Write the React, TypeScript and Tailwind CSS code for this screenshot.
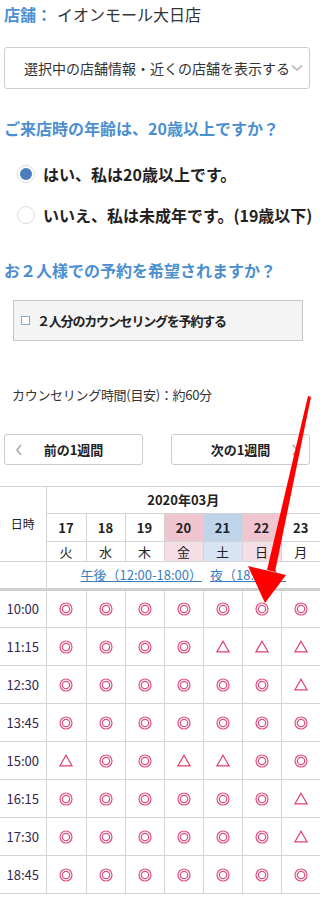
import React from "react";

const days = [
  { d: "17", w: "火", top: "", bot: "" },
  { d: "18", w: "水", top: "", bot: "" },
  { d: "19", w: "木", top: "", bot: "" },
  { d: "20", w: "金", top: "bg-[#f0c5cf]", bot: "bg-[#f6dee7]" },
  { d: "21", w: "土", top: "bg-[#bfd3e9]", bot: "bg-[#d8e4f3]" },
  { d: "22", w: "日", top: "bg-[#f0c5cf]", bot: "bg-[#f6dee7]" },
  { d: "23", w: "月", top: "", bot: "" },
];

const rows: [string, string][] = [
  ["10:00", "ooooooo"],
  ["11:15", "oooottt"],
  ["12:30", "oooooot"],
  ["13:45", "ooooooo"],
  ["15:00", "toottoo"],
  ["16:15", "oooooot"],
  ["17:30", "oooooot"],
  ["18:45", "ooooooo"],
];

function Mark({ t }: { t: string }) {
  if (t === "o") {
    return (
      <svg width="14" height="14" viewBox="0 0 14 14" className="inline-block">
        <circle cx="7" cy="7" r="6" fill="none" stroke="#e0507e" strokeWidth="1.2" />
        <circle cx="7" cy="7" r="3.7" fill="none" stroke="#d64d8a" strokeWidth="1.2" />
      </svg>
    );
  }
  return (
    <svg width="14" height="13" viewBox="0 0 14 13" className="inline-block">
      <path d="M7 1.2 L13 11.8 L1 11.8 Z" fill="none" stroke="#e0406e" strokeWidth="1.2" />
    </svg>
  );
}

export default function App() {
  const font = { fontFamily: '"Noto Sans CJK JP", "Noto Sans", sans-serif' };
  return (
    <div className="relative w-[320px] h-[899px] overflow-hidden bg-white text-[#333]" style={font}>
      {/* store */}
      <div className="pl-[4px] pt-[2px] text-[16px] leading-[24px] whitespace-nowrap">
        <span className="font-bold text-[#4b8fd0]">店舗：</span>
        <span className="ml-[5px] text-[#333]">イオンモール大日店</span>
      </div>

      {/* select */}
      <div className="mt-[21px] mx-[4px] w-[306px] h-[42px] border border-[#cfcfcf] rounded-[3px] flex items-center pl-[19px] text-[14px] text-[#333]">
        <span className="whitespace-nowrap">選択中の店舗情報・近くの店舗を表示する</span>
        <svg width="12" height="8" viewBox="0 0 12 8" className="ml-[1px]">
          <path d="M1 1.5 L6 6 L11 1.5" fill="none" stroke="#b0b0b0" strokeWidth="1.6" />
        </svg>
      </div>

      {/* question 1 */}
      <div className="mt-[27px] pl-[4px] text-[16px] leading-[24px] font-bold text-[#4b8fd0] whitespace-nowrap">
        ご来店時の年齢は、20歳以上ですか？
      </div>
      <div className="mt-[24px] flex items-center pl-[17px] h-[20px]">
        <span className="w-[18px] h-[18px] rounded-full border border-[#dddddd] bg-white flex items-center justify-center">
          <span className="w-[12px] h-[12px] rounded-full bg-[#4a7fbf]" />
        </span>
        <span className="ml-[8px] text-[16px] font-bold text-[#222] whitespace-nowrap">はい、私は20歳以上です。</span>
      </div>
      <div className="mt-[21px] flex items-center pl-[17px] h-[20px]">
        <span className="w-[18px] h-[18px] rounded-full border border-[#dddddd] bg-white" />
        <span className="ml-[8px] text-[16px] font-bold text-[#222] whitespace-nowrap">いいえ、私は未成年です。(19歳以下)</span>
      </div>

      {/* question 2 */}
      <div className="mt-[33px] pl-[4px] text-[16px] leading-[24px] font-bold text-[#4b8fd0] whitespace-nowrap">
        お２人様での予約を希望されますか？
      </div>
      <div className="mt-[18px] ml-[13px] w-[290px] h-[41px] border border-[#c8c8c8] bg-[#f4f4f4] flex items-center pl-[7px]">
        <span className="w-[9px] h-[9px] border border-[#7fa9d9] bg-white" />
        <span className="ml-[7px] text-[13px] font-bold text-[#222] whitespace-nowrap tracking-[-1.2px]">２人分のカウンセリングを予約する</span>
      </div>

      {/* caption */}
      <div className="mt-[45px] pl-[12px] text-[13px] leading-[18px] text-[#333] whitespace-nowrap tracking-[-0.3px]">
        カウンセリング時間(目安)：約60分
      </div>

      {/* week buttons */}
      <div className="mt-[30px] flex justify-between px-[4px] pr-[10px]">
        <div className="relative w-[139px] h-[31px] border border-[#cccccc] rounded-[3px] flex items-center justify-center text-[13px] font-bold text-[#222]">
          <svg width="8" height="12" viewBox="0 0 8 12" className="absolute left-[10px] top-[9px]">
            <path d="M6 1 L2 6 L6 11" fill="none" stroke="#aaaaaa" strokeWidth="1.6" />
          </svg>
          前の1週間
        </div>
        <div className="relative w-[139px] h-[31px] border border-[#cccccc] rounded-[3px] flex items-center justify-center text-[13px] font-bold text-[#222]">
          次の1週間
          <svg width="8" height="12" viewBox="0 0 8 12" className="absolute right-[10px] top-[9px]">
            <path d="M2 1 L6 6 L2 11" fill="none" stroke="#aaaaaa" strokeWidth="1.6" />
          </svg>
        </div>
      </div>

      {/* table */}
      <table className="mt-[21px] w-[320px] table-fixed border-collapse text-[13px] text-[#222]">
        <colgroup>
          <col className="w-[46px]" />
          <col className="w-[40px]" />
          <col className="w-[39px]" />
          <col className="w-[39px]" />
          <col className="w-[39px]" />
          <col className="w-[39px]" />
          <col className="w-[39px]" />
          <col className="w-[39px]" />
        </colgroup>
        <tbody>
          <tr className="h-[27px]">
            <td rowSpan={3} className="border-t border-r border-[#d4d4d4] text-center text-[12px] align-middle">日時</td>
            <td colSpan={7} className="border-t border-b border-[#d4d4d4] text-center font-bold">2020年03月</td>
          </tr>
          <tr className="h-[28px]">
            {days.map((d, i) => (
              <td key={i} className={`border-b border-[#d4d4d4] text-center font-bold ${i < 6 ? "border-r" : ""} ${d.top}`}>
                {d.d}
              </td>
            ))}
          </tr>
          <tr className="h-[20px]">
            {days.map((d, i) => (
              <td key={i} className={`border-b border-[#d4d4d4] text-center leading-[18px] ${i < 6 ? "border-r" : ""} ${d.bot}`}>
                {d.w}
              </td>
            ))}
          </tr>
          <tr className="h-[28px]">
            <td className="border-r border-t border-[#d4d4d4]" />
            <td colSpan={7} className="border-t border-[#d4d4d4] text-center whitespace-nowrap">
              <span className="text-[#3a7cc0] underline">午後（12:00-18:00）</span>
              <span className="ml-[8px] text-[#3a7cc0] underline">夜（18:00-）</span>
            </td>
          </tr>
          {rows.map(([time, marks], ri) => (
            <tr key={time} className="h-[38px]">
              <td className={`border-r border-b border-[#d4d4d4] text-center text-[#33264f] ${ri === 0 ? "border-t-[3px] border-t-[#d0d0d0]" : ""}`}>
                {time}
              </td>
              {marks.split("").map((m, i) => (
                <td
                  key={i}
                  className={`border-b border-[#d4d4d4] text-center align-middle ${i < 6 ? "border-r" : ""} ${ri === 0 ? "border-t-[3px] border-t-[#d0d0d0]" : ""}`}
                >
                  <div className="flex items-center justify-center">
                    <Mark t={m} />
                  </div>
                </td>
              ))}
            </tr>
          ))}
        </tbody>
      </table>

      {/* red arrow overlay */}
      <svg className="absolute left-0 top-0 pointer-events-none" width="320" height="899" viewBox="0 0 320 899">
        <polygon points="308,396 311,397 275,572 267,570" fill="#ff0000" />
        <polygon points="265,603 248,566 286,575" fill="#ff0000" />
      </svg>
    </div>
  );
}
